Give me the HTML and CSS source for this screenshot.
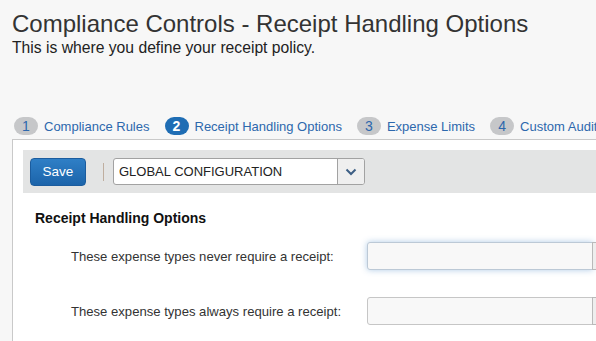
FILE: index.html
```html
<!DOCTYPE html>
<html lang="en">
<head>
  <meta charset="UTF-8">
  <meta name="viewport" content="width=device-width, initial-scale=1.0">
  <title>Compliance Controls - Receipt Handling Options</title>
  <link rel="stylesheet" href="styles.css">
</head>
<body>
  <header class="page-header">
    <h1>Compliance Controls - Receipt Handling Options</h1>
    <p class="subtitle">This is where you define your receipt policy.</p>
  </header>

  <nav class="steps">
    <a class="step"><span class="step-num">1</span>Compliance Rules</a>
    <a class="step active"><span class="step-num">2</span>Receipt Handling Options</a>
    <a class="step"><span class="step-num">3</span>Expense Limits</a>
    <a class="step"><span class="step-num">4</span>Custom Audit Rules</a>
  </nav>

  <main class="panel">
    <div class="toolbar">
      <button class="btn-save">Save</button>
      <span class="divider"></span>
      <div class="select">
        <span class="select-value">GLOBAL CONFIGURATION</span>
        <span class="select-arrow">
          <svg width="12" height="8" viewBox="0 0 12 8"><path d="M1.5 1.5 L6 6 L10.5 1.5" fill="none" stroke="#3d5f85" stroke-width="2"/></svg>
        </span>
      </div>
    </div>

    <section class="options">
      <h2>Receipt Handling Options</h2>
      <div class="field-row">
        <label>These expense types never require a receipt:</label>
        <div class="picker">
          <input type="text" class="picker-input focused">
          <button class="picker-btn"></button>
        </div>
      </div>
      <div class="field-row">
        <label>These expense types always require a receipt:</label>
        <div class="picker">
          <input type="text" class="picker-input">
          <button class="picker-btn"></button>
        </div>
      </div>
    </section>
  </main>
</body>
</html>
```

FILE: styles.css
```css
body {
  font-family: "Liberation Sans", Arial, sans-serif;
  background-color: #f7f7f7;
  margin: 0;
  padding: 0;
  overflow: hidden;
  color: #333;
}
.page-header {
  padding: 9px 12px 0;
}
.page-header h1 {
  margin: 0;
  font-size: 24px;
  font-weight: normal;
  line-height: 30px;
  color: #333;
}
.subtitle {
  margin: 0;
  font-size: 15.7px;
  line-height: 18px;
  color: #222;
}
.steps {
  display: flex;
  align-items: center;
  gap: 15px;
  margin-top: 60px;
  padding-left: 14px;
  white-space: nowrap;
  height: 18px;
  overflow: hidden;
}
.step {
  display: flex;
  align-items: center;
  gap: 6px;
  font-size: 13px;
  color: #2d68ad;
  cursor: pointer;
}
.step-num {
  display: inline-flex;
  align-items: center;
  justify-content: center;
  width: 24px;
  height: 18px;
  border-radius: 9px;
  background-color: #c6c7c9;
  color: #2d68ad;
  font-size: 14px;
}
.step.active .step-num {
  background-color: #1f6db4;
  color: #fff;
  font-weight: bold;
}
.panel {
  margin: 4px 0 0 12px;
  height: 191px;
  background-color: #fff;
  border: 1px solid #c9c9c9;
  border-right: none;
  border-bottom: none;
  padding: 10px 0 0 10px;
  overflow: hidden;
}
.toolbar {
  display: flex;
  align-items: center;
  background-color: #e3e4e4;
  height: 43px;
  padding: 0 7px;
}
.btn-save {
  width: 56px;
  height: 28px;
  border: 1px solid #1b5c9e;
  border-radius: 4px;
  background: linear-gradient(#2f7fc6, #1c64aa);
  color: #fff;
  font-family: inherit;
  font-size: 13.5px;
  cursor: pointer;
}
.divider {
  width: 1px;
  height: 18px;
  background-color: #bfae9f;
  margin: 0 9px 0 17px;
}
.select {
  display: flex;
  width: 252px;
  height: 27px;
  border: 1px solid #a2a2a2;
  border-radius: 3px;
  background-color: #fff;
  box-sizing: border-box;
  overflow: hidden;
}
.select-value {
  flex: 1;
  padding-left: 5px;
  font-size: 13px;
  line-height: 25px;
  color: #222;
}
.select-arrow {
  display: flex;
  align-items: center;
  justify-content: center;
  width: 26px;
  border-left: 1px solid #a2a2a2;
  background-color: #efefef;
}
.options {
  padding: 0 12px;
}
.options h2 {
  margin: 17px 0 0;
  font-size: 14px;
  line-height: 16px;
  color: #111;
}
.field-row {
  display: grid;
  grid-template-columns: 296px auto;
  align-items: center;
  padding-left: 36px;
  margin-top: 16px;
}
.field-row + .field-row {
  margin-top: 27px;
}
.field-row label {
  font-size: 13.1px;
  color: #333;
}
.picker {
  display: flex;
}
.picker-input {
  width: 226px;
  height: 28px;
  box-sizing: border-box;
  border: 1px solid #c6c6c6;
  border-radius: 3px 0 0 3px;
  background-color: #f8f8f8;
  margin: 0;
  outline: none;
}
.picker-input.focused {
  border-color: #bcc9d6;
  box-shadow: 0 0 6px rgba(80, 140, 200, 0.45);
}
.picker-btn {
  width: 30px;
  height: 28px;
  border: 1px solid #b9b9b9;
  background-color: #eee;
  margin-left: -1px;
}
```
